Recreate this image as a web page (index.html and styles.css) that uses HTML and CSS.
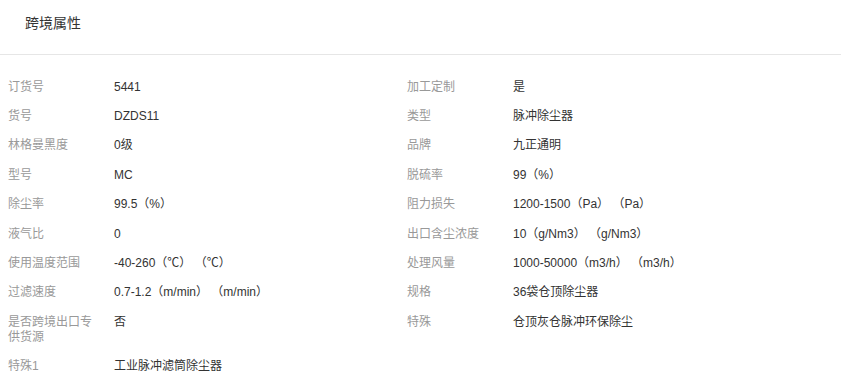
FILE: index.html
```html
<!DOCTYPE html>
<html lang="zh">
<head>
<meta charset="utf-8">
<link rel="stylesheet" href="styles.css">
</head>
<body>
<div class="panel">
  <div class="panel-head">跨境属性</div>
  <div class="attrs">
    <div class="row"><div class="label">订货号</div><div class="value">5441</div></div>
    <div class="row"><div class="label">加工定制</div><div class="value">是</div></div>
    <div class="row"><div class="label">货号</div><div class="value">DZDS11</div></div>
    <div class="row"><div class="label">类型</div><div class="value">脉冲除尘器</div></div>
    <div class="row"><div class="label">林格曼黑度</div><div class="value">0级</div></div>
    <div class="row"><div class="label">品牌</div><div class="value">九正通明</div></div>
    <div class="row"><div class="label">型号</div><div class="value">MC</div></div>
    <div class="row"><div class="label">脱硫率</div><div class="value">99（%）</div></div>
    <div class="row"><div class="label">除尘率</div><div class="value">99.5（%）</div></div>
    <div class="row"><div class="label">阻力损失</div><div class="value">1200-1500（Pa） （Pa）</div></div>
    <div class="row"><div class="label">液气比</div><div class="value">0</div></div>
    <div class="row"><div class="label">出口含尘浓度</div><div class="value">10（g/Nm3） （g/Nm3）</div></div>
    <div class="row"><div class="label">使用温度范围</div><div class="value">-40-260（℃） （℃）</div></div>
    <div class="row"><div class="label">处理风量</div><div class="value">1000-50000（m3/h） （m3/h）</div></div>
    <div class="row"><div class="label">过滤速度</div><div class="value">0.7-1.2（m/min） （m/min）</div></div>
    <div class="row"><div class="label">规格</div><div class="value">36袋仓顶除尘器</div></div>
    <div class="row"><div class="label">是否跨境出口专供货源</div><div class="value">否</div></div>
    <div class="row"><div class="label">特殊</div><div class="value">仓顶灰仓脉冲环保除尘</div></div>
    <div class="row"><div class="label">特殊1</div><div class="value">工业脉冲滤筒除尘器</div></div>
  </div>
</div>
</body>
</html>
```

FILE: styles.css
```css
html, body {
  margin: 0;
  padding: 0;
  background: #fff;
}
body {
  font-family: "Liberation Sans", "Noto Sans CJK SC", Arial, sans-serif;
  color: #333;
}
.panel-head {
  height: 54px;
  line-height: 47px;
  padding-left: 25px;
  font-size: 14px;
  color: #333;
  border-bottom: 1px solid #e6e6e6;
}
.attrs {
  display: grid;
  grid-template-columns: 399px 1fr;
  padding: 17.5px 0 0 8px;
}
.row {
  display: flex;
  font-size: 12px;
  line-height: 15px;
  padding: 7.2px 0;
}
.label {
  width: 90px;
  flex: none;
  padding-right: 16px;
  color: #999;
}
.value {
  color: #333;
  white-space: pre;
}
```
